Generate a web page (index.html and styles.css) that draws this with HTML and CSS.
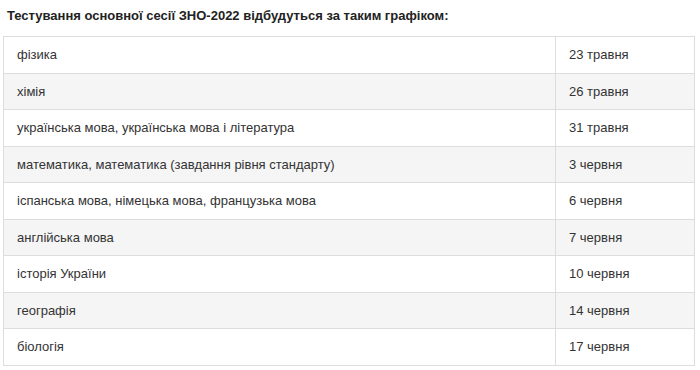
FILE: index.html
```html
<!DOCTYPE html>
<html lang="uk">
<head>
<meta charset="utf-8">
<link rel="stylesheet" href="styles.css">
</head>
<body>
<div class="page">
  <p class="lead">Тестування основної сесії ЗНО-2022 відбудуться за таким графіком:</p>
  <table class="schedule">
    <tbody>
      <tr><td class="subj">фізика</td><td class="date">23 травня</td></tr>
      <tr><td class="subj">хімія</td><td class="date">26 травня</td></tr>
      <tr><td class="subj">українська мова, українська мова і література</td><td class="date">31 травня</td></tr>
      <tr><td class="subj">математика, математика (завдання рівня стандарту)</td><td class="date">3 червня</td></tr>
      <tr><td class="subj">іспанська мова, німецька мова, французька мова</td><td class="date">6 червня</td></tr>
      <tr><td class="subj">англійська мова</td><td class="date">7 червня</td></tr>
      <tr><td class="subj">історія України</td><td class="date">10 червня</td></tr>
      <tr><td class="subj">географія</td><td class="date">14 червня</td></tr>
      <tr><td class="subj">біологія</td><td class="date">17 червня</td></tr>
    </tbody>
  </table>
</div>
</body>
</html>
```
FILE: styles.css
```css
html, body {
  margin: 0;
  padding: 0;
  background: #fff;
}
.page {
  padding: 0 6px 0 3px;
  font-family: "Liberation Sans", Arial, sans-serif;
  color: #333;
}
.lead {
  margin: 0;
  padding: 8px 0 0 4px;
  height: 28px;
  box-sizing: border-box;
  font-size: 13px;
  font-weight: bold;
  color: #222;
  line-height: 16px;
}
.schedule {
  width: 692px;
  border-collapse: collapse;
  font-size: 13px;
  table-layout: fixed;
  margin-top: 8px;
}
.schedule td {
  border: 1px solid #ddd;
  padding: 10px 13px;
  line-height: 15.5px;
  text-align: left;
  vertical-align: middle;
}
.schedule td.date {
  width: 112px;
}
.schedule tr:nth-child(even) td {
  background: #f5f5f5;
}
```
